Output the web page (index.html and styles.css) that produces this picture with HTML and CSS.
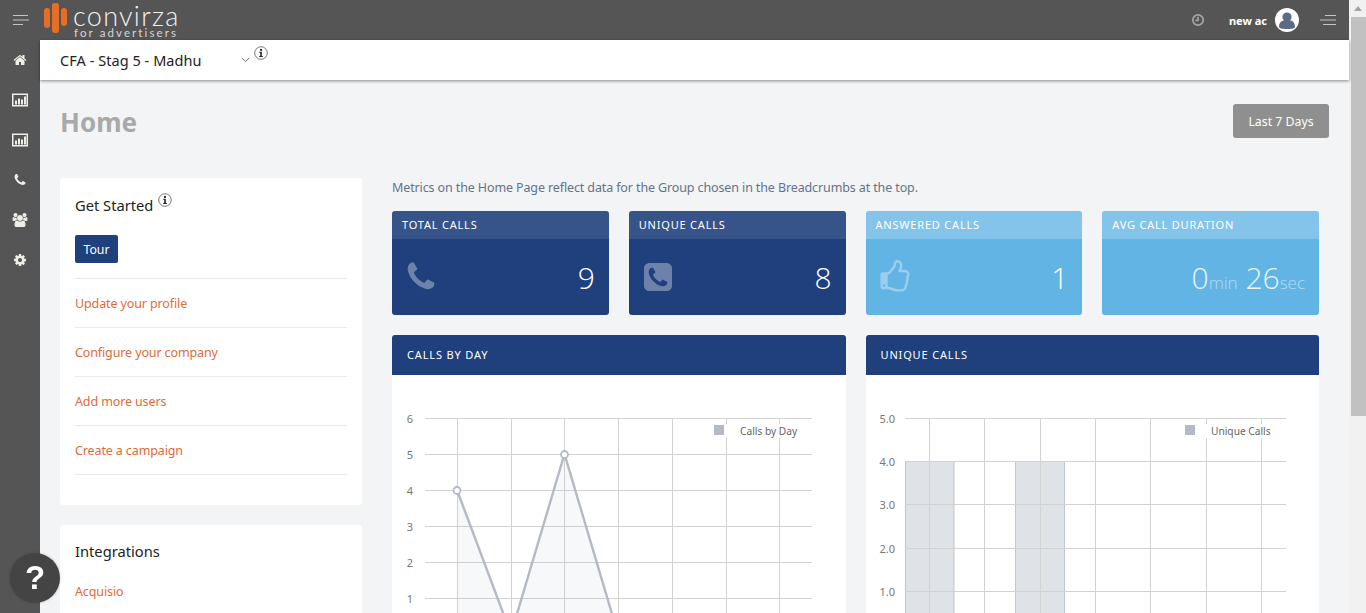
FILE: index.html
```html
<!DOCTYPE html>
<html lang="en">
<head>
  <meta charset="UTF-8">
  <title>Convirza - Home</title>
  <link rel="stylesheet" href="styles.css">
</head>
<body>
  <div class="app">
    <div class="window">
      <header class="topbar">
        <svg class="menu-lines" viewBox="0 0 16 10"><path d="M0 .5h15M0 5h16M0 9.500h10" /></svg>
        <div class="logo">
          <div class="logo-bars"><span></span><span class="tall"></span><span class="short"></span></div>
          <div class="logo-text">
            <div class="logo-name">convirza</div>
            <div class="logo-sub">for advertisers</div>
          </div>
        </div>
        <div class="topbar-right">
          <svg class="clock" viewBox="0 0 14 14"><circle cx="7" cy="7" r="5.2" /><path d="M7 3.8V7.4H4.4" /></svg>
          <span class="user-name">new ac</span>
          <svg class="avatar" viewBox="0 0 24 24"><circle cx="12" cy="12" r="12" fill="#fff" /><circle cx="12" cy="9" r="4.6" fill="#5d6b85" /><path d="M4 19c0-4.5 3-6.5 4.500-6.500h7c1.500 0 4.500 2 4.500 6.500 0 1-2 2-8 2s-8-1-8-2z" fill="#5d6b85" /></svg>
          <svg class="menu-lines right" viewBox="0 0 16 10"><path d="M5 .5h11M0 5h16M3 9.500h13" /></svg>
        </div>
      </header>
      <div class="under-top">
        <nav class="sidebar">
          <svg viewBox="0 0 1792 1792"><path d="M1472 992v480q0 26-19 45t-45 19h-384v-384h-256v384h-384q-26 0-45-19t-19-45v-480q0-1 .5-3t.5-3l575-474 575 474q1 2 1 6zm223-69l-62 74q-8 9-21 11h-3q-13 0-21-7l-692-577-692 577q-12 8-24 7-13-2-21-11l-62-74q-8-10-7-23.5t11-21.5l719-599q32-26 76-26t76 26l244 204v-195q0-14 9-23t23-9h192q14 0 23 9t9 23v408l219 182q10 8 11 21.5t-7 23.5z" /></svg>
          <svg viewBox="0 0 16 13"><path fill-rule="evenodd" d="M0 0h16v13H0zM1.500 1.500v10h13v-10z" /><path d="M3 7h2v4H3zM6 5h2v6H6zM9 6h2v5H9zM12 3h2v8h-2z" /></svg>
          <svg viewBox="0 0 16 13"><path fill-rule="evenodd" d="M0 0h16v13H0zM1.500 1.500v10h13v-10z" /><path d="M3 7h2v4H3zM6 5h2v6H6zM9 6h2v5H9zM12 3h2v8h-2z" /></svg>
          <svg viewBox="0 0 1792 1792"><path d="M1600 1240q0 27-10 70.500t-21 68.500q-21 50-122 106-94 51-186 51-27 0-53-3.500t-57.500-12.500-47-14.500-55.500-20.500-49-18q-98-35-175-83-127-79-264-216t-216-264q-48-77-83-175-3-9-18-49t-20.500-55.500-14.500-47-12.500-57.500-3.500-53q0-92 51-186 56-101 106-122 25-11 68.500-21t70.500-10q14 0 21 3 18 6 53 76 11 19 30 54t35 63.500 31 53.500q3 4 17.500 25t21.500 35.500 7 28.500q0 20-28.500 50t-62 55-62 53-28.500 46q0 9 5 22.500t8.500 20.500 14 24 11.500 19q76 137 174 235t235 174q2 1 19 11.500t24 14 20.500 8.500 22.500 5q18 0 46-28.500t53-62 55-62 50-28.500q14 0 28.500 7t35.500 21.500 25 17.500q25 15 53.500 31t63.500 35 54 30q70 35 76 53 3 7 3 21z" /></svg>
          <svg viewBox="0 0 1920 1792"><path d="M593 896q-162 5-265 128h-134q-82 0-138-40.500t-56-118.500q0-353 124-353 6 0 43.500 21t97.500 42.500 119 21.500q67 0 133-23-5 37-5 66 0 139 81 256zm1071 637q0 120-73 189.500t-194 69.500h-874q-121 0-194-69.500t-73-189.500q0-53 3.500-103.500t14-109 26.500-108.500 43-97.500 62-81 85.500-53.500 111.500-20q10 0 43 21.500t73 48 107 48 135 21.500 135-21.500 107-48 73-48 43-21.500q61 0 111.500 20t85.500 53.500 62 81 43 97.500 26.500 108.500 14 109 3.500 103.500zm-1024-1277q0 106-75 181t-181 75-181-75-75-181 75-181 181-75 181 75 75 181zm704 384q0 159-112.500 271.500t-271.500 112.500-271.500-112.500-112.500-271.500 112.500-271.500 271.500-112.500 271.500 112.500 112.500 271.500zm576 225q0 78-56 118.500t-138 40.500h-134q-103-123-265-128 81-117 81-256 0-29-5-66 66 23 133 23 59 0 119-21.500t97.500-42.500 43.500-21q124 0 124 353zm-128-609q0 106-75 181t-181 75-181-75-75-181 75-181 181-75 181 75 75 181z" /></svg>
          <svg viewBox="0 0 1792 1792"><path d="M1152 896q0-106-75-181t-181-75-181 75-75 181 75 181 181 75 181-75 75-181zm512-109v222q0 12-8 23t-20 13l-185 28q-19 54-39 91 35 50 107 138 10 12 10 25t-9 23q-27 37-99 108t-94 71q-12 0-26-9l-138-108q-44 23-91 38-16 136-29 186-7 28-36 28h-222q-14 0-24.500-8.500t-11.500-21.500l-28-184q-49-16-90-37l-141 107q-10 9-25 9-14 0-25-11-126-114-165-168-7-10-7-23 0-12 8-23 15-21 51-66.500t54-70.500q-27-50-41-99l-183-27q-13-2-21-12.500t-8-23.500v-222q0-12 8-23t19-13l186-28q14-46 39-92-40-57-107-138-10-12-10-24 0-10 9-23 26-36 98.500-107.500t94.500-71.500q13 0 26 10l138 107q44-23 91-38 16-136 29-186 7-28 36-28h222q14 0 24.500 8.500t11.500 21.500l28 184q49 16 90 37l142-107q9-9 24-9 13 0 25 10 129 119 165 170 7 8 7 22 0 12-8 23-15 21-51 66.500t-54 70.500q26 50 41 98l183 28q13 2 21 12.500t8 23.500z" /></svg>
        </nav>
        <main class="content">
          <div class="crumbs">
            <span class="crumb-name">CFA - Stag 5 - Madhu</span>
            <svg class="chevron" viewBox="0 0 9 6"><path d="M.7.8 4.500 4.700 8.300.8" /></svg>
            <svg class="info crumb-info" viewBox="0 0 14 14"><circle cx="7" cy="7" r="6.300" /><circle class="dot" cx="7" cy="3.900" r="1.100" /><path class="dot" d="M5.300 5.800h2.500v4.100h1v1H5.200v-1h1V6.800h-.9z" /></svg>
          </div>
          <div class="page">
            <div class="title-row">
              <h1>Home</h1>
              <button class="range-btn">Last 7 Days</button>
            </div>
            <div class="columns">
              <aside class="left-col">
                <section class="card started">
                  <h3>Get Started <svg class="info" viewBox="0 0 14 14"><circle cx="7" cy="7" r="6.300" /><circle class="dot" cx="7" cy="3.900" r="1.100" /><path class="dot" d="M5.300 5.800h2.500v4.100h1v1H5.200v-1h1V6.800h-.9z" /></svg></h3>
                  <button class="tour-btn">Tour</button>
                  <a class="link-row" href="#">Update your profile</a>
                  <a class="link-row" href="#">Configure your company</a>
                  <a class="link-row" href="#">Add more users</a>
                  <a class="link-row" href="#">Create a campaign</a>
                </section>
                <section class="card integrations">
                  <h3>Integrations</h3>
                  <a class="link-plain" href="#">Acquisio</a>
                </section>
              </aside>
              <div class="right-col">
                <p class="note">Metrics on the Home Page reflect data for the Group chosen in the Breadcrumbs at the top.</p>
                <div class="stats">
                  <div class="stat dark">
                    <div class="stat-head">TOTAL CALLS</div>
                    <div class="stat-body">
                      <svg viewBox="0 0 1792 1792"><path d="M1600 1240q0 27-10 70.500t-21 68.500q-21 50-122 106-94 51-186 51-27 0-53-3.500t-57.500-12.500-47-14.500-55.500-20.500-49-18q-98-35-175-83-127-79-264-216t-216-264q-48-77-83-175-3-9-18-49t-20.500-55.500-14.500-47-12.500-57.500-3.500-53q0-92 51-186 56-101 106-122 25-11 68.500-21t70.500-10q14 0 21 3 18 6 53 76 11 19 30 54t35 63.500 31 53.500q3 4 17.500 25t21.500 35.500 7 28.500q0 20-28.500 50t-62 55-62 53-28.500 46q0 9 5 22.500t8.500 20.500 14 24 11.500 19q76 137 174 235t235 174q2 1 19 11.500t24 14 20.500 8.500 22.500 5q18 0 46-28.500t53-62 55-62 50-28.500q14 0 28.500 7t35.500 21.500 25 17.500q25 15 53.500 31t63.500 35 54 30q70 35 76 53 3 7 3 21z" /></svg>
                      <span class="stat-num">9</span>
                    </div>
                  </div>
                  <div class="stat dark">
                    <div class="stat-head">UNIQUE CALLS</div>
                    <div class="stat-body">
                      <svg class="square" viewBox="128 128 1536 1536"><path d="M1408 1193q0-11-2-16t-18-16.500-40.500-25-47.500-26.500-45.500-25-28.500-15q-5-3-19-13t-25-15-21-5q-15 0-36.500 20.500t-39.500 45-38.500 45-33.500 20.500q-7 0-16.500-3.500t-15.500-6.500-17-9.500-14-8.500q-99-55-170-126.500t-127-170.500q-2-3-8.500-14t-9.500-17-6.500-15.500-3.500-16.500q0-13 20.500-33.500t45-38.500 45-39.500 20.500-36.500q0-10-5-21t-15-25-13-19q-3-6-15-28.500t-25-45.500-26.500-47.500-25-40.500-16.500-18-16-2q-48 0-101 22-46 21-80 94.500t-34 130.500q0 16 2.500 34t5 30.500 9 33 10 29.500 12.500 33 11 30q60 164 216.500 320.500t320.500 216.500q6 2 30 11t33 12.500 29.500 10 33 9 30.500 5 34 2.500q57 0 130.500-34t94.500-80q22-53 22-101zm256-777v960q0 119-84.500 203.500t-203.500 84.500h-960q-119 0-203.500-84.500t-84.500-203.500v-960q0-119 84.500-203.500t203.500-84.500h960q119 0 203.500 84.500t84.500 203.500z" /></svg>
                      <span class="stat-num">8</span>
                    </div>
                  </div>
                  <div class="stat light">
                    <div class="stat-head">ANSWERED CALLS</div>
                    <div class="stat-body">
                      <svg viewBox="0 0 1792 1792"><path d="M384 1344q0-26-19-45t-45-19-45 19-19 45 19 45 45 19 45-19 19-45zm1152-576q0-51-39-89.500t-89-38.500h-352q0-58 48-159.500t48-160.500q0-98-32-145t-128-47q-26 26-38 85t-30.500 125.500-59.500 109.500q-22 23-77 91-4 5-23 30t-31.500 41-34.500 42.500-40 44-38.500 35.500-40 27-35.500 9h-32v640h32q13 0 31.500 3t33 6.500 38 11 35 11.500 35.500 12.500 29 10.500q211 73 342 73h121q192 0 192-167 0-26-5-56 30-16 47.500-52.500t17.500-73.500-18-69q53-50 53-119 0-25-10-55.500t-25-47.500q32-1 53.500-47t21.500-81zm128-1q0 89-49 163 9 33 9 69 0 77-38 144 3 21 3 43 0 101-60 178 1 139-85 219.500t-227 80.500h-129q-96 0-189.500-22.500t-216.500-65.500q-116-40-138-40h-288q-53 0-90.500-37.500t-37.500-90.500v-640q0-53 37.500-90.500t90.500-37.500h274q36-24 137-155 58-75 107-128 24-25 35.500-85.500t30.500-126.500 62-108q39-37 90-37 84 0 151 32.500t102 101.500 35 186q0 93-48 192h176q104 0 180 76t76 179z" /></svg>
                      <span class="stat-num">1</span>
                    </div>
                  </div>
                  <div class="stat light">
                    <div class="stat-head">AVG CALL DURATION</div>
                    <div class="stat-body">
                      <span class="stat-num wide">0<small>min</small> 26<small>sec</small></span>
                    </div>
                  </div>
                </div>
                <div class="charts">
                  <section class="panel">
                    <div class="panel-head">CALLS BY DAY</div>
                    <svg class="chart" viewBox="392 375 454 260">
                      <g class="grid">
                        <path d="M425 418.500H812M425 454.500H812M425 490.500H812M425 526.500H812M425 562.500H812M425 598.500H812" />
                        <path d="M457.500 418V635M511.500 418V635M564.500 418V635M618.500 418V635M672.500 418V635M726.500 418V635M779.500 418V635" />
                      </g>
                      <path class="area" d="M457 634V490L511 634 564.500 454 618 634z" />
                      <path class="trend" d="M457 490 511 634 564.500 454 618 634" />
                      <circle class="point" cx="457" cy="490.500" r="3.500" />
                      <circle class="point" cx="564.500" cy="454.500" r="3.500" />
                      <g class="axis">
                        <text x="413" y="423">6</text><text x="413" y="459">5</text><text x="413" y="495">4</text>
                        <text x="413" y="531">3</text><text x="413" y="567">2</text><text x="413" y="603">1</text>
                      </g>
                      <rect class="legend-bg" x="724" y="424" width="78" height="14" />
                      <rect class="swatch" x="714" y="425" width="10" height="10" />
                      <text class="legend" x="740" y="435">Calls by Day</text>
                    </svg>
                  </section>
                  <section class="panel">
                    <div class="panel-head">UNIQUE CALLS</div>
                    <svg class="chart" viewBox="866 375 454 260">
                      <rect class="bar" x="905.500" y="461.500" width="48.500" height="180" />
                      <rect class="bar" x="1015.500" y="461.500" width="49" height="180" />
                      <g class="grid">
                        <path d="M905 418.500H1286M905 461.500H1286M905 504.500H1286M905 548.500H1286M905 591.500H1286" />
                        <path d="M929.500 418V635M984.500 418V635M1040.500 418V635M1095.500 418V635M1150.500 418V635M1206.500 418V635M1261.500 418V635" />
                      </g>
                      <g class="axis">
                        <text x="895" y="423">5.0</text><text x="895" y="466">4.0</text><text x="895" y="509">3.0</text>
                        <text x="895" y="553">2.0</text><text x="895" y="596">1.0</text>
                      </g>
                      <rect class="legend-bg" x="1195" y="424" width="78" height="14" />
                      <rect class="swatch" x="1185" y="425" width="10" height="10" />
                      <text class="legend" x="1211" y="435">Unique Calls</text>
                    </svg>
                  </section>
                </div>
              </div>
            </div>
          </div>
        </main>
      </div>
    </div>
    <div class="scrollbar">
      <div class="scroll-arrow"></div>
      <div class="scroll-thumb"></div>
    </div>
  </div>
  <div class="help-btn">?</div>
</body>
</html>
```

FILE: styles.css
```css
* {
  box-sizing: border-box;
}

html, body {
  margin: 0;
  height: 100%;
  overflow: hidden;
}

body {
  font-family: "Noto Sans", "Open Sans", Arial, sans-serif;
  font-size: 12.5px;
  letter-spacing: -0.12px;
  background-color: #f3f4f6;
  color: #333;
}

.app {
  display: flex;
  height: 100vh;
  overflow: hidden;
}

.window {
  flex: 1;
  min-width: 0;
  display: flex;
  flex-direction: column;
}

/* top bar */
.topbar {
  height: 40px;
  flex: none;
  background-color: #555;
  display: flex;
  align-items: center;
  padding-left: 13px;
  padding-right: 13px;
  color: #fff;
}

.menu-lines {
  width: 16px;
  height: 10px;
  fill: none;
  stroke: #c4c4c4;
  stroke-width: 1;
}

.logo {
  display: flex;
  margin-left: 15px;
  height: 40px;
}

.logo-bars {
  display: flex;
  gap: 2px;
  align-items: flex-start;
  margin-top: 3px;
}

.logo-bars span {
  width: 6px;
  height: 20px;
  margin-top: 5px;
  border-radius: 3px;
  background-color: #e76f25;
}

.logo-bars .tall {
  width: 7px;
  height: 30px;
  margin-top: 0;
}

.logo-bars .short {
  height: 18px;
}

.logo-text {
  margin-left: 6px;
  width: 108px;
}

.logo-name {
  font-family: Lato, "Noto Sans", sans-serif;
  font-weight: 300;
  font-size: 27px;
  line-height: 25px;
  margin-top: 3px;
  letter-spacing: 1.3px;
  color: #f1f1f1;
}

.logo-sub {
  font-family: Lato, "Noto Sans", sans-serif;
  font-size: 11.5px;
  line-height: 10px;
  letter-spacing: 2.1px;
  margin-left: 1px;
  white-space: nowrap;
  color: #d5d5d5;
}

.topbar-right {
  margin-left: auto;
  display: flex;
  align-items: center;
}

.clock {
  width: 14px;
  height: 14px;
  fill: none;
  stroke: #a5a5a5;
  stroke-width: 1.7;
}

.user-name {
  margin-left: 24px;
  font-size: 11px;
  font-weight: 700;
  letter-spacing: 0;
}

.avatar {
  width: 24px;
  height: 24px;
  margin-left: 8px;
}

.menu-lines.right {
  margin-left: 21px;
}

/* left nav */
.under-top {
  flex: 1;
  min-height: 0;
  display: flex;
}

.sidebar {
  width: 40px;
  flex: none;
  background-color: #555;
  display: flex;
  flex-direction: column;
  align-items: center;
  padding-top: 13px;
  gap: 26px;
}

.sidebar svg {
  width: 16px;
  height: 14px;
  fill: #eeeee8;
}

/* breadcrumb */
.content {
  flex: 1;
  min-width: 0;
}

.crumbs {
  height: 40px;
  background-color: #fff;
  box-shadow: 0 1px 3px rgba(0, 0, 0, 0.45);
  position: relative;
  display: flex;
  padding-left: 20px;
}

.crumb-name {
  font-size: 14.5px;
  line-height: 40px;
  letter-spacing: 0.05px;
  color: #222;
  width: 181px;
}

.chevron {
  width: 9px;
  height: 6px;
  margin-top: 17px;
  fill: none;
  stroke: #66748a;
  stroke-width: 1;
}

.info {
  width: 14px;
  height: 14px;
  fill: none;
  stroke: #555;
  stroke-width: 0.8;
}

.info .dot {
  fill: #222;
  stroke: none;
}

.crumb-info {
  margin-left: 4px;
  margin-top: 6px;
}

/* page */
.page {
  padding-left: 20px;
  padding-right: 20px;
}

.title-row {
  display: flex;
  justify-content: space-between;
  align-items: center;
  padding-top: 24px;
  margin-bottom: 40px;
}

h1 {
  margin: 2px 0 0;
  font-size: 26px;
  line-height: 32px;
  font-weight: 700;
  letter-spacing: 0;
  color: #a9a9a9;
}

.range-btn {
  width: 96px;
  height: 34px;
  border: none;
  border-radius: 3px;
  background-color: #8f8f8f;
  color: #fff;
  font-family: inherit;
  font-size: 12.3px;
}

.columns {
  display: flex;
  gap: 30px;
}

.left-col {
  width: 302px;
  flex: none;
  display: flex;
  flex-direction: column;
  gap: 20px;
}

.card {
  background-color: #fff;
  border-radius: 3px;
  padding: 15px;
}

.started {
  height: 327px;
}

.card h3 {
  margin: 0;
  font-size: 14.7px;
  line-height: 24px;
  font-weight: 400;
  letter-spacing: 0;
  color: #222;
  display: flex;
  align-items: flex-start;
  white-space: pre;
}

.card h3 .info {
  margin-top: 0;
  margin-left: 1px;
}

.integrations {
  padding-top: 14px;
}

.tour-btn {
  display: block;
  width: 43px;
  height: 28px;
  margin-top: 18px;
  margin-bottom: 15px;
  padding: 0;
  border: none;
  border-radius: 2px;
  background-color: #20407d;
  color: #fff;
  font-family: inherit;
  font-size: 12.3px;
}

.link-row {
  display: block;
  width: 272px;
  height: 49px;
  line-height: 49px;
  border-top: 1px solid #e9ebef;
  color: #e26a38;
  text-decoration: none;
}

.link-row:last-of-type {
  height: 50px;
  border-bottom: 1px solid #e9ebef;
}

.link-plain {
  display: block;
  margin-top: 19px;
  line-height: 20px;
  color: #e26a38;
  text-decoration: none;
}

.right-col {
  width: 927px;
  flex: none;
}

.note {
  margin: 1px 0 14px;
  line-height: 18px;
  color: #64728a;
}

.stats {
  display: grid;
  grid-template-columns: repeat(4, 1fr);
  gap: 20px;
}

.stat {
  height: 104px;
  border-radius: 3px;
  overflow: hidden;
  color: #fff;
}

.stat.dark {
  background-color: #20407d;
}

.stat.light {
  background-color: #62b4e5;
}

.stat-head {
  height: 28px;
  line-height: 28px;
  padding-left: 10px;
  font-size: 11px;
  letter-spacing: 0.8px;
  background-color: rgba(255, 255, 255, 0.1);
}

.stat.light .stat-head {
  background-color: rgba(255, 255, 255, 0.22);
}

.stat-body {
  display: flex;
  align-items: center;
  justify-content: space-between;
  height: 76px;
  padding-left: 12px;
  padding-right: 14px;
}

.stat-body svg {
  width: 34px;
  height: 34px;
  fill: rgba(255, 255, 255, 0.35);
}

.stat-body svg.square {
  width: 28px;
  height: 28px;
  margin-left: 3px;
}

.stat-num {
  font-family: "Open Sans", "Noto Sans", sans-serif;
  font-weight: 300;
  font-size: 30px;
  letter-spacing: 0;
}

.stat-num.wide {
  margin-left: auto;
  color: #eaf5fc;
}

.stat-num small {
  font-size: 17px;
  opacity: 0.6;
}

.charts {
  display: grid;
  grid-template-columns: 1fr 1fr;
  gap: 20px;
  margin-top: 20px;
}

.panel {
  min-width: 0;
  overflow: hidden;
  background-color: #fff;
  border-radius: 3px 3px 0 0;
}

.panel-head {
  height: 40px;
  line-height: 40px;
  padding-left: 15px;
  font-size: 11px;
  letter-spacing: 0.85px;
  color: #fff;
  background-color: #20407d;
}

.chart {
  display: block;
  width: 454px;
  height: 260px;
}

.grid path {
  fill: none;
  stroke: #d2d2d2;
  stroke-width: 1;
}

.area {
  fill: rgba(179, 186, 198, 0.1);
}

.trend {
  fill: none;
  stroke: #b3bac6;
  stroke-width: 2.4;
}

.point {
  fill: #fff;
  stroke: #b3bac6;
  stroke-width: 1.8;
}

.bar {
  fill: #dfe2e7;
  stroke: #bdc5d0;
  stroke-width: 1;
}

.axis text {
  font-size: 11px;
  letter-spacing: 0;
  fill: #777;
  text-anchor: end;
}

.legend-bg {
  fill: #fff;
}

.swatch {
  fill: #b3bac6;
}

.legend {
  font-size: 10.2px;
  letter-spacing: 0;
  fill: #666;
}

/* fake browser scrollbar */
.scrollbar {
  width: 17px;
  flex: none;
  background-color: #f1f1f1;
  padding-left: 2px;
}

.scroll-arrow {
  width: 0;
  height: 0;
  margin: 6px 0 6px 3px;
  border-left: 4px solid transparent;
  border-right: 4px solid transparent;
  border-bottom: 5px solid #a3a3a3;
}

.scroll-thumb {
  height: 399px;
  background-color: #c1c1c1;
}

.help-btn {
  position: fixed;
  left: 10px;
  bottom: 10px;
  width: 50px;
  height: 50px;
  border-radius: 50%;
  background-color: #444;
  box-shadow: 0 0 3px rgba(0, 0, 0, 0.2);
  color: #fff;
  font-family: "Liberation Sans", Arial, sans-serif;
  font-size: 33px;
  font-weight: 700;
  line-height: 50px;
  letter-spacing: 0;
  text-align: center;
}
```
